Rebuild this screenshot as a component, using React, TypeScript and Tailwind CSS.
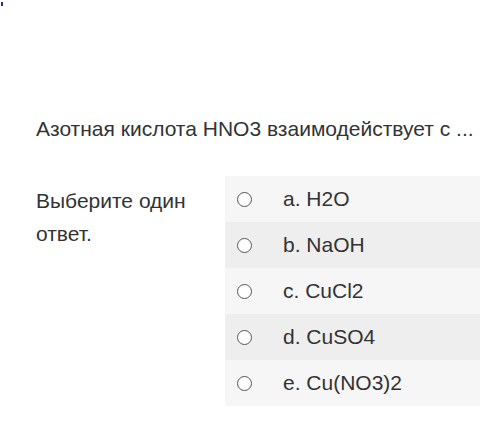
const options = ["a. H2O", "b. NaOH", "c. CuCl2", "d. CuSO4", "e. Cu(NO3)2"]

export default function App() {
  return (
    <div className="relative h-[440px] w-[480px] overflow-hidden bg-white text-[21px] text-[#333] font-['Liberation_Sans',Arial,sans-serif]">
      <div className="absolute left-[1px] top-[2px] h-[4px] w-[2px] bg-[#2a2a9a]" />
      <div className="pt-[116px] pl-[36px]">
        <p className="leading-[26px] whitespace-nowrap">Азотная кислота HNO3 взаимодействует с ...</p>
      </div>
      <div className="mt-[34px] flex">
        <div className="w-[225px] shrink-0 pl-[36px] pt-[8px] leading-[33px]">Выберите один ответ.</div>
        <div className="flex-1">
          {options.map((o, i) => (
            <label
              key={o}
              className={`flex h-[46px] items-center ${i % 2 === 0 ? "bg-[#f6f6f6]" : "bg-[#eeeeee]"}`}
            >
              <span className="ml-[12px] block h-[15px] w-[15px] rounded-full border border-[#555] bg-white" />
              <span className="ml-[31px]">{o}</span>
            </label>
          ))}
        </div>
      </div>
    </div>
  )
}
